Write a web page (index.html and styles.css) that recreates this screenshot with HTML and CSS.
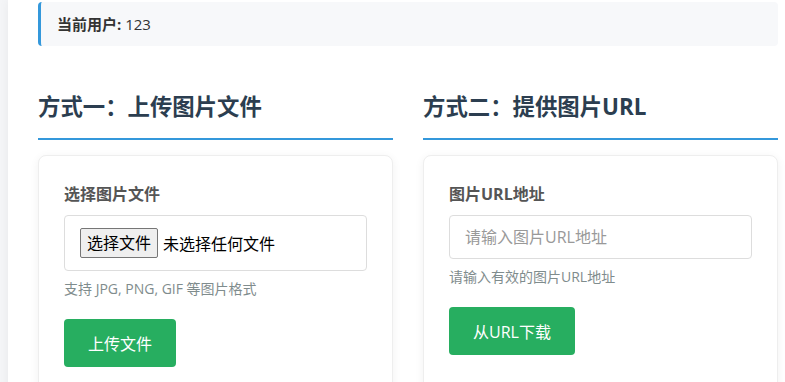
FILE: index.html
```
<!DOCTYPE html>
<html lang="zh-CN">
<head>
  <meta charset="UTF-8">
  <meta name="viewport" content="width=device-width, initial-scale=1.0">
  <title>图片上传</title>
  <link rel="stylesheet" href="styles.css">
</head>

<body>

<div class="container">

  <!-- Current user -->
  <div class="user-info">
    <strong>当前用户:</strong> 123
  </div>

  <div class="methods">

    <!-- Method 1: upload a file -->
    <section class="method">
      <h2>方式一：上传图片文件</h2>
      <form class="card" onsubmit="return false">
        <div class="form-group">
          <label class="field-label" for="file">选择图片文件</label>
          <label class="file-box" for="file">
            <span class="file-btn">选择文件</span>
            <span class="file-name" id="fileName">未选择任何文件</span>
          </label>
          <input type="file" id="file" class="file-hidden" accept="image/*">
          <p class="help">支持 JPG, PNG, GIF 等图片格式</p>
        </div>
        <button class="btn" type="submit">上传文件</button>
      </form>
    </section>

    <!-- Method 2: image URL -->
    <section class="method">
      <h2>方式二：提供图片URL</h2>
      <form class="card" onsubmit="return false">
        <div class="form-group">
          <label class="field-label" for="url">图片URL地址</label>
          <input type="text" id="url" class="text-input" placeholder="请输入图片URL地址">
          <p class="help">请输入有效的图片URL地址</p>
        </div>
        <button class="btn" type="submit">从URL下载</button>
      </form>
    </section>

  </div>
</div>

<script>
  // Show the chosen file name next to the button
  document.getElementById('file').addEventListener('change', (e) => {
    const f = e.target.files[0];
    document.getElementById('fileName').textContent = f ? f.name : '未选择任何文件';
  });
</script>

</body>
</html>
```

FILE: styles.css
```
body {
  font-family: "Open Sans", "Noto Sans CJK SC", sans-serif;
  background-color: #f4f5f7;
  margin: 0;
  color: #333;
}

.container {
  background-color: white;
  margin-left: 8px;
  padding: 2px 7px 40px 30px;
  min-height: 400px;
  box-shadow: 0 0 10px rgba(0, 0, 0, 0.05);
}

/* User info bar */
.user-info {
  background-color: #f7f8fa;
  border-left: 3px solid #3498db;
  border-radius: 4px;
  padding: 11px 16px;
  line-height: 22px;
  font-size: 15px;
  color: #333;
}

.methods {
  display: grid;
  grid-template-columns: 1fr 1fr;
  gap: 30px;
  margin-top: 45px;
}

h2 {
  margin: 0 0 15px;
  padding-bottom: 15px;
  border-bottom: 2px solid #3498db;
  font-size: 22.4px;
  line-height: 32px;
  color: #2c3e50;
}

.card {
  background-color: white;
  border: 1px solid #eee;
  border-radius: 8px;
  box-shadow: 0 2px 10px rgba(0, 0, 0, 0.06);
  padding: 25px 25px 40px;
}

.form-group {
  margin-bottom: 21px;
}

.field-label {
  display: block;
  font-size: 16px;
  font-weight: bold;
  color: #555;
  margin-bottom: 10px;
}

/* Fake file input so the texts stay in Chinese */
.file-box {
  display: flex;
  align-items: center;
  border: 1px solid #ddd;
  border-radius: 4px;
  padding: 12px 15px;
  font-size: 16px;
  cursor: pointer;
}

.file-btn {
  background-color: #efefef;
  border: 1px solid #767676;
  border-radius: 2px;
  padding: 2px 6px;
  line-height: 24px;
  color: #000;
  margin-right: 5px;
}

.file-name {
  color: #000;
}

.file-hidden {
  display: none;
}

.text-input {
  display: block;
  width: 100%;
  box-sizing: border-box;
  border: 1px solid #ddd;
  border-radius: 4px;
  padding: 10px 15px;
  font-family: inherit;
  font-size: 16px;
  line-height: 22px;
}

.text-input::placeholder {
  color: #999;
}

.help {
  margin: 7px 0 0;
  font-size: 14px;
  color: #7f8c8d;
}

.btn {
  background-color: #27ae60;
  color: white;
  border: none;
  border-radius: 4px;
  padding: 12px 24px;
  font-family: inherit;
  font-size: 16px;
  cursor: pointer;
}

.btn:hover {
  background-color: #229954;
}
```
